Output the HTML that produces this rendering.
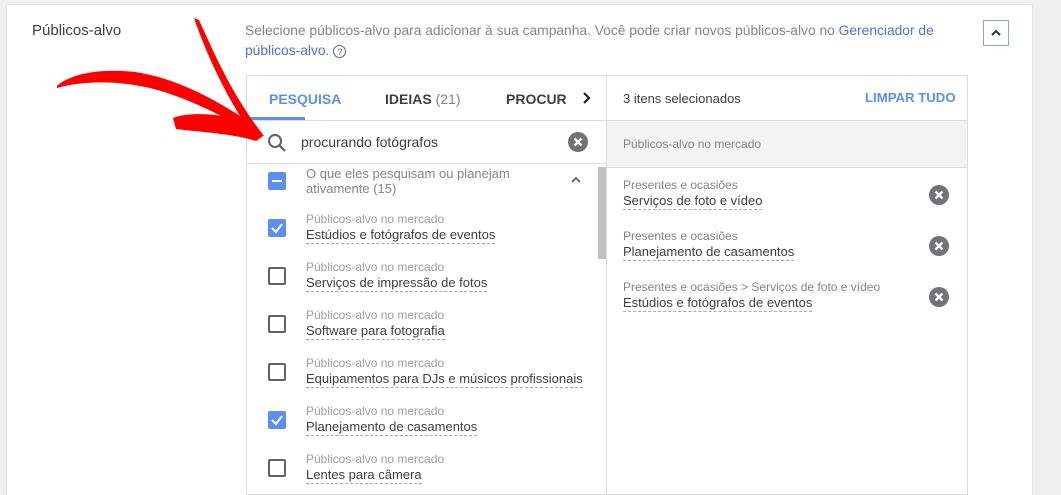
<!DOCTYPE html>
<html><head><meta charset="utf-8"><style>
*{margin:0;padding:0;box-sizing:border-box}
body{width:1061px;height:491px;overflow:hidden;background:#eef0f1;font-family:"Liberation Sans",sans-serif;position:relative;color:#3c4043}
.a{position:absolute;white-space:nowrap}
.card{position:absolute;left:7px;top:5px;width:1025px;height:490px;background:#fff;box-shadow:0 0 2px rgba(0,0,0,.15)}
.sm{font-size:12px;color:#9aa0a6}
.it{font-size:13px;color:#3c4043;border-bottom:1px dashed #aaa;padding-bottom:1px}
.cb{position:absolute;left:268px;width:18px;height:18px;border:2px solid #5f6368;border-radius:2px}
.cbc{border:none;background:#5b8ff0}
.x{position:absolute;width:20px;height:20px;border-radius:50%;background:#707478}
</style></head><body>
<div class="card"></div>
<div class="a" style="left:32px;top:22px;font-size:15px;color:#3c4043">Públicos-alvo</div>
<div class="a" style="left:245px;top:21px;font-size:13.8px;color:#80868b;line-height:20px">Selecione públicos-alvo para adicionar à sua campanha. Você pode criar novos públicos-alvo no <span style="color:#4a72e0">Gerenciador de</span><br><span style="color:#4a72e0">públicos-alvo</span>. <span style="display:inline-block;width:13px;height:13px;border:1px solid #666;border-radius:50%;font-size:9px;text-align:center;line-height:12px;color:#666">?</span></div>
<div class="a" style="left:983px;top:20px;width:26px;height:26px;border:1px solid #7ea6f5;text-align:center"><svg width="14" height="14" viewBox="0 0 14 14" style="margin-top:5px"><path d="M3 9L7 5L11 9" stroke="#333" stroke-width="2" fill="none"/></svg></div>
<div class="a" style="left:246px;top:75px;width:722px;height:420px;border:1px solid #dadce0"></div>
<div class="a" style="left:606px;top:75px;width:1px;height:420px;background:#dadce0"></div>
<div class="a" style="left:246px;top:120px;width:722px;height:1px;background:#dadce0"></div>
<div class="a" style="left:246px;top:163px;width:360px;height:1px;background:#dadce0"></div>
<div class="a" style="left:607px;top:121px;width:360px;height:47px;background:#f3f3f3;border-bottom:1px solid #dadce0"></div>
<div class="a" style="left:269px;top:91px;font-size:14px;font-weight:bold;color:#5b8ff0">PESQUISA</div>
<div class="a" style="left:246px;top:117px;width:59px;height:3px;background:#5b8ff0"></div>
<div class="a" style="left:385px;top:91px;font-size:14px;font-weight:bold;color:#3c4043">IDEIAS <span style="font-weight:normal;color:#80868b">(21)</span></div>
<div class="a" style="left:506px;top:91px;font-size:14px;font-weight:bold;color:#3c4043;width:61px;overflow:hidden">PROCURA</div>
<svg class="a" style="left:579px;top:90px" width="14" height="16"><path d="M5 3L10 8L5 13" stroke="#222" stroke-width="2.2" fill="none"/></svg>
<svg class="a" style="left:266px;top:132px" width="22" height="22" viewBox="0 0 22 22"><circle cx="9" cy="9" r="6" stroke="#5f6368" stroke-width="2" fill="none"/><path d="M13.5 13.5L19 19" stroke="#5f6368" stroke-width="2.2"/></svg>
<div class="a" style="left:301px;top:134px;font-size:14px;color:#3c4043">procurando fotógrafos</div>
<div class="x" style="left:568px;top:132px"><svg width="20" height="20"><path d="M6.5 6.5L13.5 13.5M13.5 6.5L6.5 13.5" stroke="#fff" stroke-width="2.4"/></svg></div>
<div class="a" style="left:598px;top:167px;width:8px;height:92px;background:#c0c0c0"></div>
<div class="cb cbc" style="top:172px"><div style="position:absolute;left:4px;top:8px;width:10px;height:2px;background:#fff"></div></div>
<div class="a" style="left:306px;top:166px;font-size:13px;color:#80868b;line-height:15px">O que eles pesquisam ou planejam<br>ativamente (15)</div>
<svg class="a" style="left:569px;top:174px" width="14" height="12"><path d="M3 8L7 4L11 8" stroke="#555" stroke-width="1.6" fill="none"/></svg>

<div class="cb cbc" style="top:219px"><svg width="18" height="18"><path d="M4 9L8 13L14 5" stroke="#fff" stroke-width="2" fill="none"/></svg></div>
<div class="a sm" style="left:306px;top:212px">Públicos-alvo no mercado</div><div class="a it" style="left:306px;top:227px">Estúdios e fotógrafos de eventos</div>
<div class="cb" style="top:267px"></div>
<div class="a sm" style="left:306px;top:260px">Públicos-alvo no mercado</div><div class="a it" style="left:306px;top:275px">Serviços de impressão de fotos</div>
<div class="cb" style="top:315px"></div>
<div class="a sm" style="left:306px;top:308px">Públicos-alvo no mercado</div><div class="a it" style="left:306px;top:323px">Software para fotografia</div>
<div class="cb" style="top:363px"></div>
<div class="a sm" style="left:306px;top:356px">Públicos-alvo no mercado</div><div class="a it" style="left:306px;top:371px">Equipamentos para DJs e músicos profissionais</div>
<div class="cb cbc" style="top:411px"><svg width="18" height="18"><path d="M4 9L8 13L14 5" stroke="#fff" stroke-width="2" fill="none"/></svg></div>
<div class="a sm" style="left:306px;top:404px">Públicos-alvo no mercado</div><div class="a it" style="left:306px;top:419px">Planejamento de casamentos</div>
<div class="cb" style="top:459px"></div>
<div class="a sm" style="left:306px;top:452px">Públicos-alvo no mercado</div><div class="a it" style="left:306px;top:467px">Lentes para câmera</div>
<div class="a" style="left:623px;top:91px;font-size:13px;color:#3c4043">3 itens selecionados</div>
<div class="a" style="left:865px;top:90px;font-size:13.2px;font-weight:bold;color:#5b8ff0">LIMPAR TUDO</div>
<div class="a" style="left:623px;top:137px;font-size:12px;color:#80868b">Públicos-alvo no mercado</div>
<div class="a" style="left:623px;top:178px;font-size:12px;color:#80868b">Presentes e ocasiões</div><div class="a it" style="left:623px;top:193px">Serviços de foto e vídeo</div>
<div class="a" style="left:623px;top:229px;font-size:12px;color:#80868b">Presentes e ocasiões</div><div class="a it" style="left:623px;top:244px">Planejamento de casamentos</div>
<div class="a" style="left:623px;top:280px;font-size:12px;color:#80868b">Presentes e ocasiões &gt; Serviços de foto e vídeo</div><div class="a it" style="left:623px;top:295px">Estúdios e fotógrafos de eventos</div>
<div class="x" style="left:929px;top:185px"><svg width="20" height="20"><path d="M6.5 6.5L13.5 13.5M13.5 6.5L6.5 13.5" stroke="#fff" stroke-width="2.4"/></svg></div>
<div class="x" style="left:929px;top:236px"><svg width="20" height="20"><path d="M6.5 6.5L13.5 13.5M13.5 6.5L6.5 13.5" stroke="#fff" stroke-width="2.4"/></svg></div>
<div class="x" style="left:929px;top:287px"><svg width="20" height="20"><path d="M6.5 6.5L13.5 13.5M13.5 6.5L6.5 13.5" stroke="#fff" stroke-width="2.4"/></svg></div>
<svg class="a" style="left:0;top:0" width="300" height="160" viewBox="0 0 300 160">
<path d="M57 86C70 74 100 68 135 72C175 78 215 98 258 128L262 138C230 120 190 98 150 88C120 81 85 80 57 88Z" fill="#f00"/>
<path d="M194 18L199 20C215 55 232 95 264 136L252 134C235 110 212 70 194 18Z" fill="#f00"/>
<path d="M173 118C190 111 225 114 248 122L263 136L256 141C235 134 200 132 176 129Z" fill="#f00"/>
</svg>
</body></html>
